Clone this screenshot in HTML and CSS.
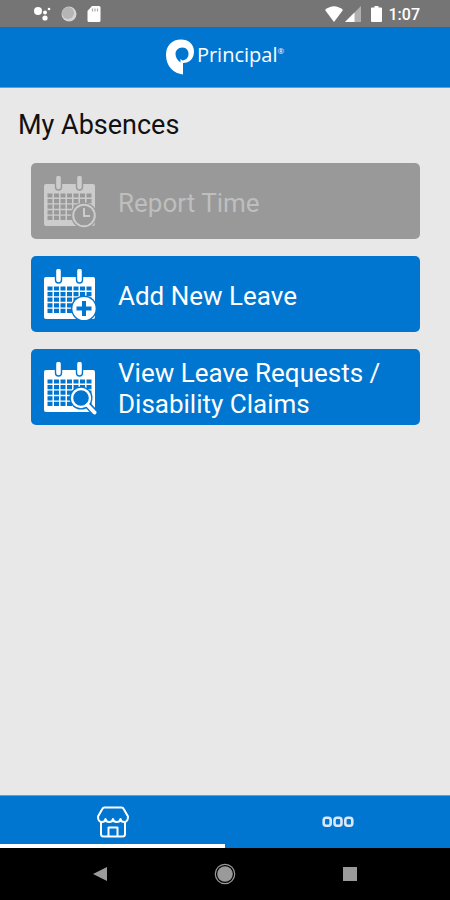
FILE: index.html
```html
<!DOCTYPE html>
<html lang="en">
<head>
<meta charset="utf-8">
<meta name="viewport" content="width=device-width, initial-scale=1">
<title>My Absences</title>
<link rel="stylesheet" href="styles.css">
</head>
<body>
<svg class="defs" aria-hidden="true">
  <defs>
    <g id="calendar">
      <rect x="0" y="8" width="51" height="42" rx="2" fill="currentColor"/>
      <path d="M3.500 19.500H48M3.500 25.100H48M3.500 30.700H48M3.500 36.300H48M3.500 41.900H48" fill="none" stroke="var(--tile)" stroke-width="4.200" stroke-dasharray="5 1.500"/>
      <rect x="11.500" y="-1" width="6" height="15" rx="3" fill="currentColor" stroke="var(--tile)" stroke-width="1.400"/>
      <rect x="32.500" y="-1" width="6" height="15" rx="3" fill="currentColor" stroke="var(--tile)" stroke-width="1.400"/>
    </g>
  </defs>
</svg>
<div class="screen">
  <div class="status">
    <div class="status-group">
      <svg width="18" height="16" viewBox="0 0 18 16" fill="#fff"><circle cx="5" cy="5" r="4"/><circle cx="12" cy="6.500" r="2"/><circle cx="16" cy="3" r="1.300"/><circle cx="12" cy="12" r="2.600"/></svg>
      <svg width="16" height="16" viewBox="0 0 16 16"><circle cx="8" cy="8" r="7.500" fill="#d4d4d4"/><circle cx="7" cy="7" r="6" fill="#b5b5b5"/></svg>
      <svg width="14" height="16" viewBox="0 0 14 16"><path d="M5 0h7q1.500 0 1.500 1.500v13q0 1.500-1.500 1.500H2q-1.500 0-1.500-1.500V5z" fill="#fff"/><path d="M5.500 2.500v3M8 2.500v3M10.500 2.500v3" stroke="#aaa" stroke-width="1.200"/></svg>
    </div>
    <div class="status-group status-right">
      <svg width="18" height="16" viewBox="0 0 18 16"><path d="M0 4Q9-3.500 18 4L9 16z" fill="#fff"/></svg>
      <svg width="16" height="16" viewBox="0 0 16 16"><path d="M16 0v16H0z" fill="#b0b0b0"/><path d="M9.500 6.500V16H0z" fill="#fff"/></svg>
      <svg class="battery" width="11" height="16" viewBox="0 0 11 16"><path d="M3.500 0h4v1.500H10q1 0 1 1V15q0 1-1 1H1q-1 0-1-1V2.500q0-1 1-1h2.500z" fill="#fff"/></svg>
      <span class="time">1:07</span>
    </div>
  </div>
  <header class="brand">
    <svg width="28" height="36" viewBox="0 0 28 36"><path fill="#fff" fill-rule="evenodd" d="M15 0.500C22.500 0.500 28 5 28 12.500C28 19.500 23.500 24 17 24V35.500C8 34.500 0 27.500 0 16C0 6.500 6 0.500 15 0.500zM16.500 8.500C12 8.500 9.500 11.500 9.500 15C9.500 18.500 11.500 21.500 14.500 23.500V20L16.500 21.500C20 21 22.500 18.500 22.500 15C22.500 11.500 20.500 8.500 16.500 8.500z"/></svg>
    <span class="brand-name">Principal<sup>®</sup></span>
  </header>
  <main>
    <h1>My Absences</h1>
    <div class="actions">
      <button class="action" disabled>
        <svg width="54" height="54" viewBox="0 0 54 54"><use href="#calendar"/><circle cx="40" cy="39.500" r="13" fill="var(--tile)"/><circle cx="40" cy="39.500" r="10.800" fill="none" stroke="currentColor" stroke-width="2"/><path d="M40 32v8h6" fill="none" stroke="currentColor" stroke-width="2"/></svg>
        <span class="label">Report Time</span>
      </button>
      <button class="action">
        <svg width="54" height="54" viewBox="0 0 54 54"><use href="#calendar"/><circle cx="40" cy="39.500" r="13" fill="var(--tile)"/><circle cx="40" cy="39.500" r="11.600" fill="currentColor"/><path d="M40 32v15M32.500 39.500h15" stroke="var(--tile)" stroke-width="4"/></svg>
        <span class="label">Add New Leave</span>
      </button>
      <button class="action">
        <svg width="54" height="54" viewBox="0 0 54 54"><use href="#calendar"/><path d="M42 41L51 51" stroke="var(--tile)" stroke-width="7"/><circle cx="37" cy="36" r="11.500" fill="var(--tile)"/><circle cx="37" cy="36" r="9" fill="none" stroke="currentColor" stroke-width="2.400"/><path d="M43.500 43L50.500 50.500" stroke="currentColor" stroke-width="4" stroke-linecap="round"/></svg>
        <span class="label">View Leave Requests / Disability Claims</span>
      </button>
    </div>
  </main>
  <nav class="tabs">
    <a class="tab tab-active" href="#home" aria-label="Home">
      <svg width="32" height="32" viewBox="0 0 32 32" fill="none" stroke="#fff" stroke-width="2" stroke-linejoin="round"><path d="M7.500 1.500h17q1.500 0 2.200 1.500L31 10.500q0 5.500-3.800 5.500Q24 16 23.500 13Q23 16 19.800 16Q16.500 16 16 13Q15.500 16 12.200 16Q9 16 8.500 13Q8 16 4.800 16Q1 16 1 10.500L5.300 3Q6 1.500 7.500 1.500z"/><path d="M4 16V28q0 2.500 2.500 2.500h19q2.500 0 2.500-2.500V16M11.500 30V21.500h9V30"/></svg>
    </a>
    <a class="tab" href="#more" aria-label="More">
      <svg width="32" height="12" viewBox="0 0 32 12" fill="none" stroke="#dbe7fa" stroke-width="2.600"><rect x="1.700" y="1.700" width="7" height="8" rx="2.500"/><rect x="12.500" y="1.700" width="7" height="8" rx="2.500"/><rect x="23.300" y="1.700" width="7" height="8" rx="2.500"/></svg>
    </a>
  </nav>
  <div class="system">
    <svg width="14" height="16" viewBox="0 0 14 16"><path d="M14 1v14L0 8z" fill="#9a9a9a"/></svg>
    <svg width="22" height="22" viewBox="0 0 22 22"><circle cx="11" cy="11" r="7.800" fill="#9a9a9a"/><circle cx="11" cy="11" r="9.700" fill="none" stroke="#9a9a9a" stroke-width="1.200"/></svg>
    <svg width="14" height="14" viewBox="0 0 14 14"><rect width="14" height="14" fill="#9a9a9a"/></svg>
  </div>
</div>
</body>
</html>
```
FILE: styles.css
```css
* {
  box-sizing: border-box;
}

body {
  margin: 0;
  background: #e8e8e8;
  color: #111;
  font-family: Roboto, "Liberation Sans", sans-serif;
}

svg {
  display: block;
  flex: none;
}

.defs {
  position: absolute;
  width: 0;
  height: 0;
}

.screen {
  display: flex;
  flex-direction: column;
  min-height: 100vh;
}

.status {
  display: flex;
  justify-content: space-between;
  align-items: center;
  height: 27px;
  padding: 0 30px 0 33px;
  background: #757575;
  color: #fff;
}

.status-group {
  display: flex;
  align-items: center;
  gap: 10px;
}

.status-right {
  gap: 2px;
}

.battery {
  margin: 0 5px 0 8px;
}

.time {
  padding-top: 2px;
  font-size: 16px;
  font-weight: 500;
  line-height: 20px;
}

.brand {
  display: flex;
  justify-content: center;
  align-items: center;
  gap: 3px;
  height: 61px;
  border-bottom: 1px solid #5b9fdc;
  background: #0076d1;
  color: #fff;
}

.brand-name {
  padding-bottom: 4px;
  font-family: "Open Sans", sans-serif;
  font-size: 20px;
  font-weight: 500;
  line-height: 28px;
}

.brand-name sup {
  font-size: 8px;
  line-height: 8px;
  vertical-align: 8px;
}

main {
  flex: 1;
  padding: 21px 18px;
}

h1 {
  margin: 0;
  font-size: 27px;
  font-weight: 400;
  line-height: 32px;
}

.actions {
  display: flex;
  flex-direction: column;
  gap: 17px;
  padding: 22px 12px 0 13px;
}

.action {
  --tile: #0076d1;
  display: flex;
  align-items: center;
  gap: 20px;
  min-height: 76px;
  padding: 9px 13px 5px;
  border: 0;
  border-radius: 5px;
  background: var(--tile);
  color: #fff;
  font: 400 26px/31px Roboto, "Liberation Sans", sans-serif;
  text-align: left;
}

.action:disabled {
  --tile: #999;
  color: #ccc;
}

.action:disabled .label {
  color: #bebebe;
}

.tabs {
  display: flex;
  height: 53px;
  border-top: 1px solid #5b9fdc;
  background: #0076d1;
}

.tab {
  display: flex;
  flex: 1;
  justify-content: center;
  align-items: center;
  padding-top: 4px;
  border-bottom: 4px solid transparent;
}

.tab-active {
  border-bottom-color: #fff;
}

.system {
  display: flex;
  justify-content: space-between;
  align-items: center;
  height: 52px;
  padding: 0 93px;
  background: #000;
}
```
